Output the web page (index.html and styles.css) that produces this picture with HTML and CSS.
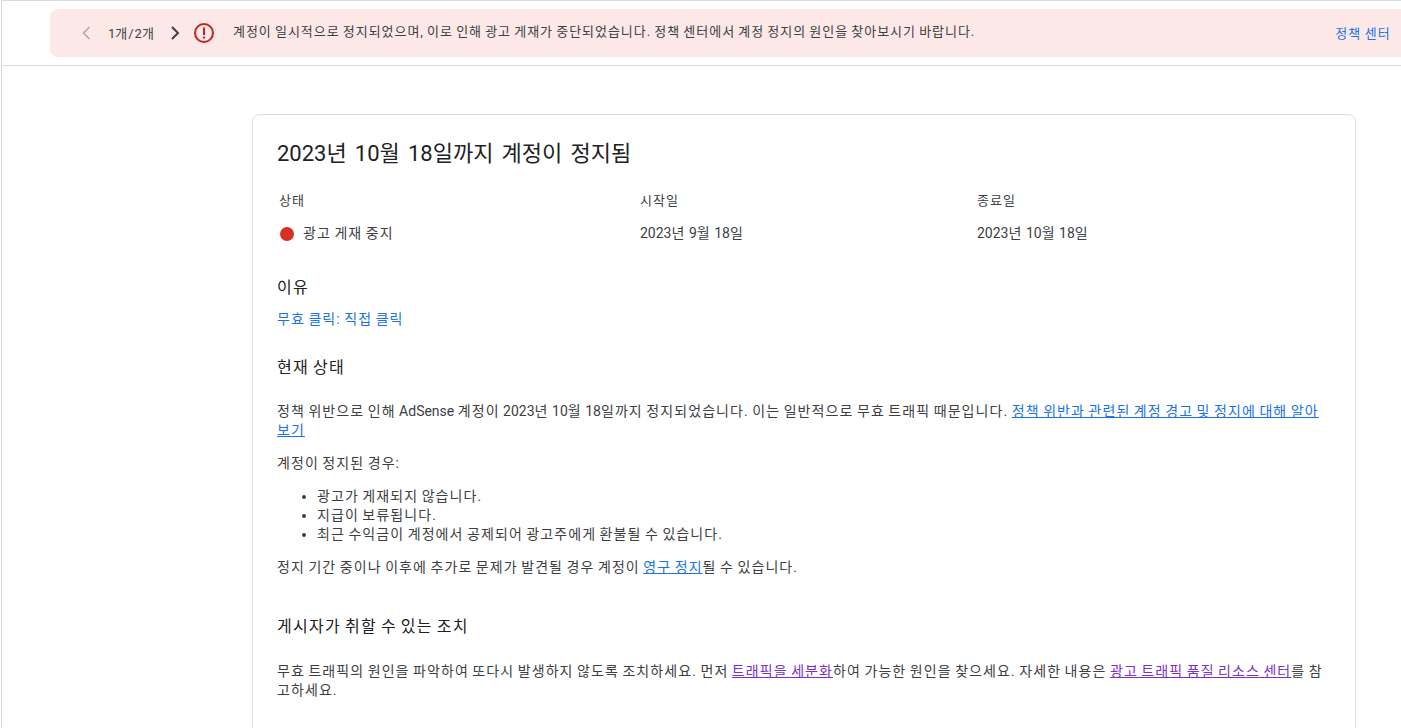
FILE: index.html
```html
<!DOCTYPE html>
<html lang="ko">
<head>
   <meta charset="UTF-8">
   <meta name="viewport" content="width=device-width, initial-scale=1.0">
   <title>정책 센터</title>
   <link rel="stylesheet" href="styles.css">
</head>
<body>
   <div class="frame">
   <header class="top-bar">
      <div class="banner">
         <button class="pager-btn pager-btn-off" aria-label="이전">
            <svg width="24" height="24" viewBox="0 0 24 24"><path d="M15.500 6l-6 6 6 6" fill="none" stroke="currentColor" stroke-width="1.500"/></svg>
         </button>
         <span class="pager-count"><span class="num">1</span>개/<span class="num">2</span>개</span>
         <button class="pager-btn" aria-label="다음">
            <svg width="24" height="24" viewBox="0 0 24 24"><path d="M9 6l6 6-6 6" fill="none" stroke="currentColor" stroke-width="2"/></svg>
         </button>
         <svg class="alert-icon" width="24" height="24" viewBox="0 0 24 24">
            <circle cx="12" cy="12" r="9" fill="none" stroke="#c5221f" stroke-width="2"/>
            <rect x="11" y="6.500" width="2" height="7.500" fill="#c5221f"/>
            <rect x="11" y="15.500" width="2" height="2" fill="#c5221f"/>
         </svg>
         <p class="banner-text">계정이 일시적으로 정지되었으며, 이로 인해 광고 게재가 중단되었습니다. 정책 센터에서 계정 정지의 원인을 찾아보시기 바랍니다.</p>
         <a class="banner-link" href="#">정책 센터</a>
      </div>
   </header>

   <main class="content">
      <section class="card">
         <h1 class="card-title">2023년 10월 18일까지 계정이 정지됨</h1>

         <div class="facts">
            <div class="fact-label">상태</div>
            <div class="fact-label">시작일</div>
            <div class="fact-label">종료일</div>
            <div class="fact-value status"><span class="status-dot"></span>광고 게재 중지</div>
            <div class="fact-value"><span class="num">2023</span>년 <span class="num">9</span>월 <span class="num">18</span>일</div>
            <div class="fact-value"><span class="num">2023</span>년 <span class="num">10</span>월 <span class="num">18</span>일</div>
         </div>

         <h2 class="section-title reason-title">이유</h2>
         <a class="reason-link" href="#">무효 클릭: 직접 클릭</a>

         <h2 class="section-title state-title">현재 상태</h2>
         <p class="para">정책 위반으로 인해 <span class="num">AdSense</span> 계정이 <span class="num">2023</span>년 <span class="num">10</span>월 <span class="num">18</span>일까지 정지되었습니다. 이는 일반적으로 무효 트래픽 때문입니다. <a href="#">정책 위반과 관련된 계정 경고 및 정지에 대해 알아보기</a></p>
         <p class="para">계정이 정지된 경우:</p>
         <ul class="para-list">
            <li>광고가 게재되지 않습니다.</li>
            <li>지급이 보류됩니다.</li>
            <li>최근 수익금이 계정에서 공제되어 광고주에게 환불될 수 있습니다.</li>
         </ul>
         <p class="para">정지 기간 중이나 이후에 추가로 문제가 발견될 경우 계정이 <a href="#">영구 정지</a>될 수 있습니다.</p>

         <h2 class="section-title action-title">게시자가 취할 수 있는 조치</h2>
         <p class="para">무효 트래픽의 원인을 파악하여 또다시 발생하지 않도록 조치하세요. 먼저 <a class="visited" href="#">트래픽을 세분화</a>하여 가능한 원인을 찾으세요. 자세한 내용은 <a class="visited" href="#">광고 트래픽 품질 리소스 센터</a>를 참고하세요.</p>
      </section>
   </main>
   </div>
</body>
</html>
```

FILE: styles.css
```css
* {
   box-sizing: border-box;
}

body {
   margin: 0;
   height: 728px;
   overflow: hidden;
   padding-left: 1px;
   background: #fff;
   color: #3c4043;
   font-family: Roboto, "Noto Sans CJK KR", sans-serif;
   font-size: 14px;
   line-height: 19px;
   letter-spacing: 1.08px;
   word-spacing: -1.08px;
}

.frame {
   height: 100%;
   border-top: 1px solid #dadce0;
   border-left: 1px solid #dadce0;
}

/* 숫자와 영문은 자간을 넓히지 않음 */
.num {
   letter-spacing: 0;
}

.top-bar {
   height: 65px;
   padding: 8px 0 0 48px;
   border-bottom: 1px solid #dadce0;
}

.banner {
   display: flex;
   align-items: center;
   height: 48px;
   padding: 0 10px 0 24px;
   border-radius: 8px 0 0 8px;
   background: #fce8e6;
   font-size: 13px;
   letter-spacing: 0.96px;
   word-spacing: -0.96px;
}

.pager-btn {
   display: flex;
   width: 24px;
   height: 24px;
   padding: 0;
   border: 0;
   background: none;
   color: #3c4043;
}

.pager-btn-off {
   color: #a8a9aa;
}

.pager-count {
   width: 65px;
   padding: 1px 0 0 10px;
}

.alert-icon {
   margin: 0 0 0 5px;
}

.banner-text {
   flex: 1;
   margin: -4px 0 0 17px;
}

.banner-link {
   margin-top: 1px;
   color: #1a73e8;
   text-decoration: none;
   letter-spacing: 1.200px;
   word-spacing: -1.200px;
}

.content {
   padding: 48px 45px 0 250px;
}

.card {
   height: 640px;
   padding: 24px 24px 0;
   border: 1px solid #dadce0;
   border-radius: 8px;
}

.card-title {
   margin: 0;
   color: #202124;
   font-size: 22px;
   font-weight: 400;
   line-height: 30px;
   letter-spacing: 0;
   word-spacing: 2.700px;
}

.facts {
   display: grid;
   grid-template-columns: 361px 337px 1fr;
   grid-template-rows: 19px 19px;
   row-gap: 14px;
   margin-top: 22px;
   padding-left: 2px;
}

.fact-label {
   color: #3c4043;
   font-size: 13px;
}

.status {
   display: flex;
   align-items: center;
}

.status-dot {
   width: 14px;
   height: 14px;
   margin: 0 9px 0 1px;
   border-radius: 50%;
   background: #d93025;
}

.section-title {
   margin: 0;
   color: #202124;
   font-size: 16px;
   font-weight: 400;
   line-height: 22px;
   letter-spacing: 1.270px;
   word-spacing: -1.270px;
}

.reason-title {
   margin-top: 34px;
}

.reason-link {
   display: block;
   margin-top: 11px;
   color: #1a73e8;
   text-decoration: none;
}

.state-title {
   margin-top: 28px;
}

.para {
   margin: 0 0 14px;
}

.state-title + .para {
   margin-top: 23px;
}

.action-title + .para {
   margin-top: 24px;
}

.para a {
   color: #1a73e8;
}

.para a.visited {
   color: #7b2fd0;
}

.para-list {
   margin: 0 0 14px;
   padding-left: 40px;
}

.action-title {
   margin-top: 39px;
}
```
